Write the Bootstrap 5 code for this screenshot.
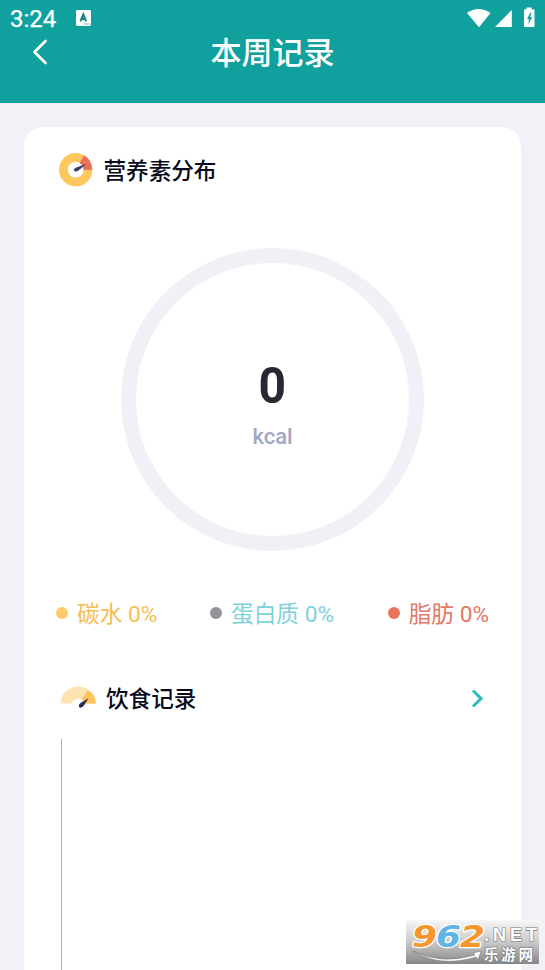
<!DOCTYPE html>
<html lang="zh-CN">
<head>
<meta charset="utf-8">
<meta name="viewport" content="width=device-width, initial-scale=1">
<title>本周记录</title>
<link href="https://cdn.jsdelivr.net/npm/bootstrap@5.3.0/dist/css/bootstrap.min.css" rel="stylesheet">
<style>
body{height:970px;background:#f1f2f7;font-family:Roboto,"Noto Sans CJK SC",sans-serif;line-height:1}
svg{display:block;flex:none}
.app-head{height:103px;background:#10a19f;color:#fff}
.status{height:36px;padding:0 9px 0 10px}
.clock{font-size:24px;line-height:38px;font-weight:400;width:66px;-webkit-text-stroke:.25px #fff}
.note-icon{margin-top:10px}
.title-bar{height:32px;padding:0 32px}
.page-title{font-size:31px;line-height:32px;font-weight:500;padding-top:3px}
.side{width:16px}
.panel{height:843px;margin:24px 24px 0;border-radius:19px 19px 0 0;background:#fff}
.sect{height:36px;color:#090a1c;font-size:22.6px;font-weight:500}
.sect span{padding-top:4px}
.sect-a{margin:25px 35px 0 34px}
.sect-b{margin:52px 36px 0}
.sect-a span{margin-left:-.5px}
.ring{width:303px;height:303px;border:15px solid #f0f1f6;border-radius:50%;margin:60px auto 0;padding-top:14px}
.amount{font-size:50px;line-height:50px;font-weight:700;color:#272833;margin-top:-2px;transform:scaleX(.96)}
.unit{font-size:22px;line-height:26px;font-weight:500;color:#a3a6c4;margin-top:13px}
.legend-row{height:30px;margin:47px 32px 0;font-size:22.7px;font-weight:400}
.legend-row span{padding-top:4px}
.dot{width:12px;height:12px;border-radius:50%;margin-right:9px}
.c-carb{color:#f5bd55}.c-prot{color:#7ed1dc;margin-left:-1px}.c-fat{color:#e37968}
.d-carb{background:#ffca6b}.d-prot{background:#929298}.d-fat{background:#ea735b}
.axis{width:1px;height:232px;background:#b4b4b4;margin:23px 0 0 37px}
.stamp{right:6px;bottom:6px}
</style>
<script src="https://cdn.jsdelivr.net/npm/bootstrap@5.3.0/dist/js/bootstrap.bundle.min.js"></script>
</head>
<body class="overflow-hidden position-relative">
<header class="app-head">
  <div class="status d-flex">
    <span class="clock">3:24</span>
    <svg class="note-icon" width="15" height="17" viewBox="0 0 15 17"><rect width="15" height="16" rx="1.4" fill="#fff"/><path d="M4.400 11.300 7.300 4.300 10.200 11.300M5.500 9H9.200" fill="none" stroke="#10827f" stroke-width="1.900"/><path d="M8 14h1.200M10.300 14h1.200M12.600 14h1.200" stroke="#10827f" stroke-width="1.200"/></svg>
    <svg class="ms-auto" width="70" height="30" viewBox="466 0 70 30" fill="#fff"><path d="M467 13Q478.500 4.800 490.500 13L479 27.200Z"/><path d="M495 27 511.800 10V27Z"/><path fill-rule="evenodd" d="M526.500 7.500h5V9.300h2q1 0 1 1V26q0 1-1 1h-8.500q-1 0-1-1V10.300q0-1 1-1h1.500ZM530.500 12.500 527 18.800H528.700V24L532.200 17H530.200L531.500 12.500Z"/></svg>
  </div>
  <div class="title-bar d-flex align-items-center justify-content-between">
    <svg class="side" width="16" height="26" viewBox="0 0 16 26"><path d="M13.500 2 2.500 13 13.500 24" fill="none" stroke="#fff" stroke-width="2.700" stroke-linecap="round" stroke-linejoin="round"/></svg>
    <h1 class="page-title mb-0">本周记录</h1>
    <span class="side"></span>
  </div>
</header>
<main class="panel d-flow-root overflow-hidden">
  <div class="sect sect-a d-flex align-items-center">
    <svg width="46" height="36" viewBox="0 0 46 36"><circle cx="17.700" cy="17.700" r="12.200" fill="none" stroke="#ffc85f" stroke-width="9"/><path d="M17.700 17.700 26 3.200Q34 8 34.200 18Z" fill="#ea705d"/><circle cx="17.700" cy="17.700" r="7.700" fill="#fff"/><path d="M28.500 11.800 20.800 18.300Q17 21 15.800 18Q15.500 16.500 18.500 15.400Z" fill="#38395b"/></svg>
    <span>营养素分布</span>
  </div>
  <div class="ring d-flex flex-column align-items-center justify-content-center">
    <div class="amount">0</div>
    <div class="unit">kcal</div>
  </div>
  <div class="legend-row d-flex justify-content-between align-items-center">
    <div class="d-flex align-items-center c-carb"><i class="dot d-carb"></i><span>碳水 0%</span></div>
    <div class="d-flex align-items-center c-prot"><i class="dot d-prot"></i><span>蛋白质 0%</span></div>
    <div class="d-flex align-items-center c-fat"><i class="dot d-fat"></i><span>脂肪 0%</span></div>
  </div>
  <div class="sect sect-b d-flex align-items-center">
    <svg width="46" height="36" viewBox="0 0 46 36"><path d="M.7 23.500A17.500 17 0 0 1 35.700 23.500H25A7 7 0 0 0 12 23.500Z" fill="#ffe4b3"/><path d="M27.500 10Q36 14.500 35.700 23.500H24L22 19Z" fill="#ffc35a"/><path d="M28.500 18.200 23.600 26Q20.800 29 19 27Q18 24.800 20.500 23Z" fill="#2c2d51"/></svg>
    <span>饮食记录</span>
    <svg class="ms-auto" width="14" height="22" viewBox="0 0 14 22"><path d="M2 3.500 10 11.500 2 19.500" fill="none" stroke="#2ebbb9" stroke-width="3"/></svg>
  </div>
  <div class="axis"></div>
</main>
<svg class="stamp position-absolute overflow-visible" width="133" height="44" viewBox="0 0 133 44">
  <defs><linearGradient id="shade" x2="0" y2="1"><stop stop-color="#f7f7f8"/><stop offset=".5" stop-color="#c9c9c9"/><stop offset="1" stop-color="#878787"/></linearGradient></defs>
  <rect width="133" height="44" fill="url(#shade)"/>
  <path d="M7 31Q35 45 69 35L67 33 75 31 72 40 70 37Q34 48 7 31Z" fill="#fff" stroke="#777" stroke-width=".6"/>
  <g font-family="DejaVu Sans,sans-serif" font-weight="700" font-style="italic" font-size="31" stroke="#fff" stroke-width="2.500" stroke-linejoin="round" paint-order="stroke">
    <text x="6" y="27" textLength="25" lengthAdjust="spacingAndGlyphs" fill="#f7962d">9</text>
    <text x="30" y="27" textLength="25" lengthAdjust="spacingAndGlyphs" fill="#62b4e5">6</text>
    <text x="54" y="27" textLength="25" lengthAdjust="spacingAndGlyphs" fill="#f7962d">2</text>
  </g>
  <g fill="#fff" stroke="#777" stroke-width="1.200" paint-order="stroke" font-weight="700">
    <text x="78" y="21" textLength="53" lengthAdjust="spacing" font-family="Liberation Sans,sans-serif" font-size="18">.NET</text>
    <text x="78" y="40" textLength="49" font-family="Noto Sans CJK SC,sans-serif" font-size="14.500">乐游网</text>
  </g>
</svg>
</body>
</html>
